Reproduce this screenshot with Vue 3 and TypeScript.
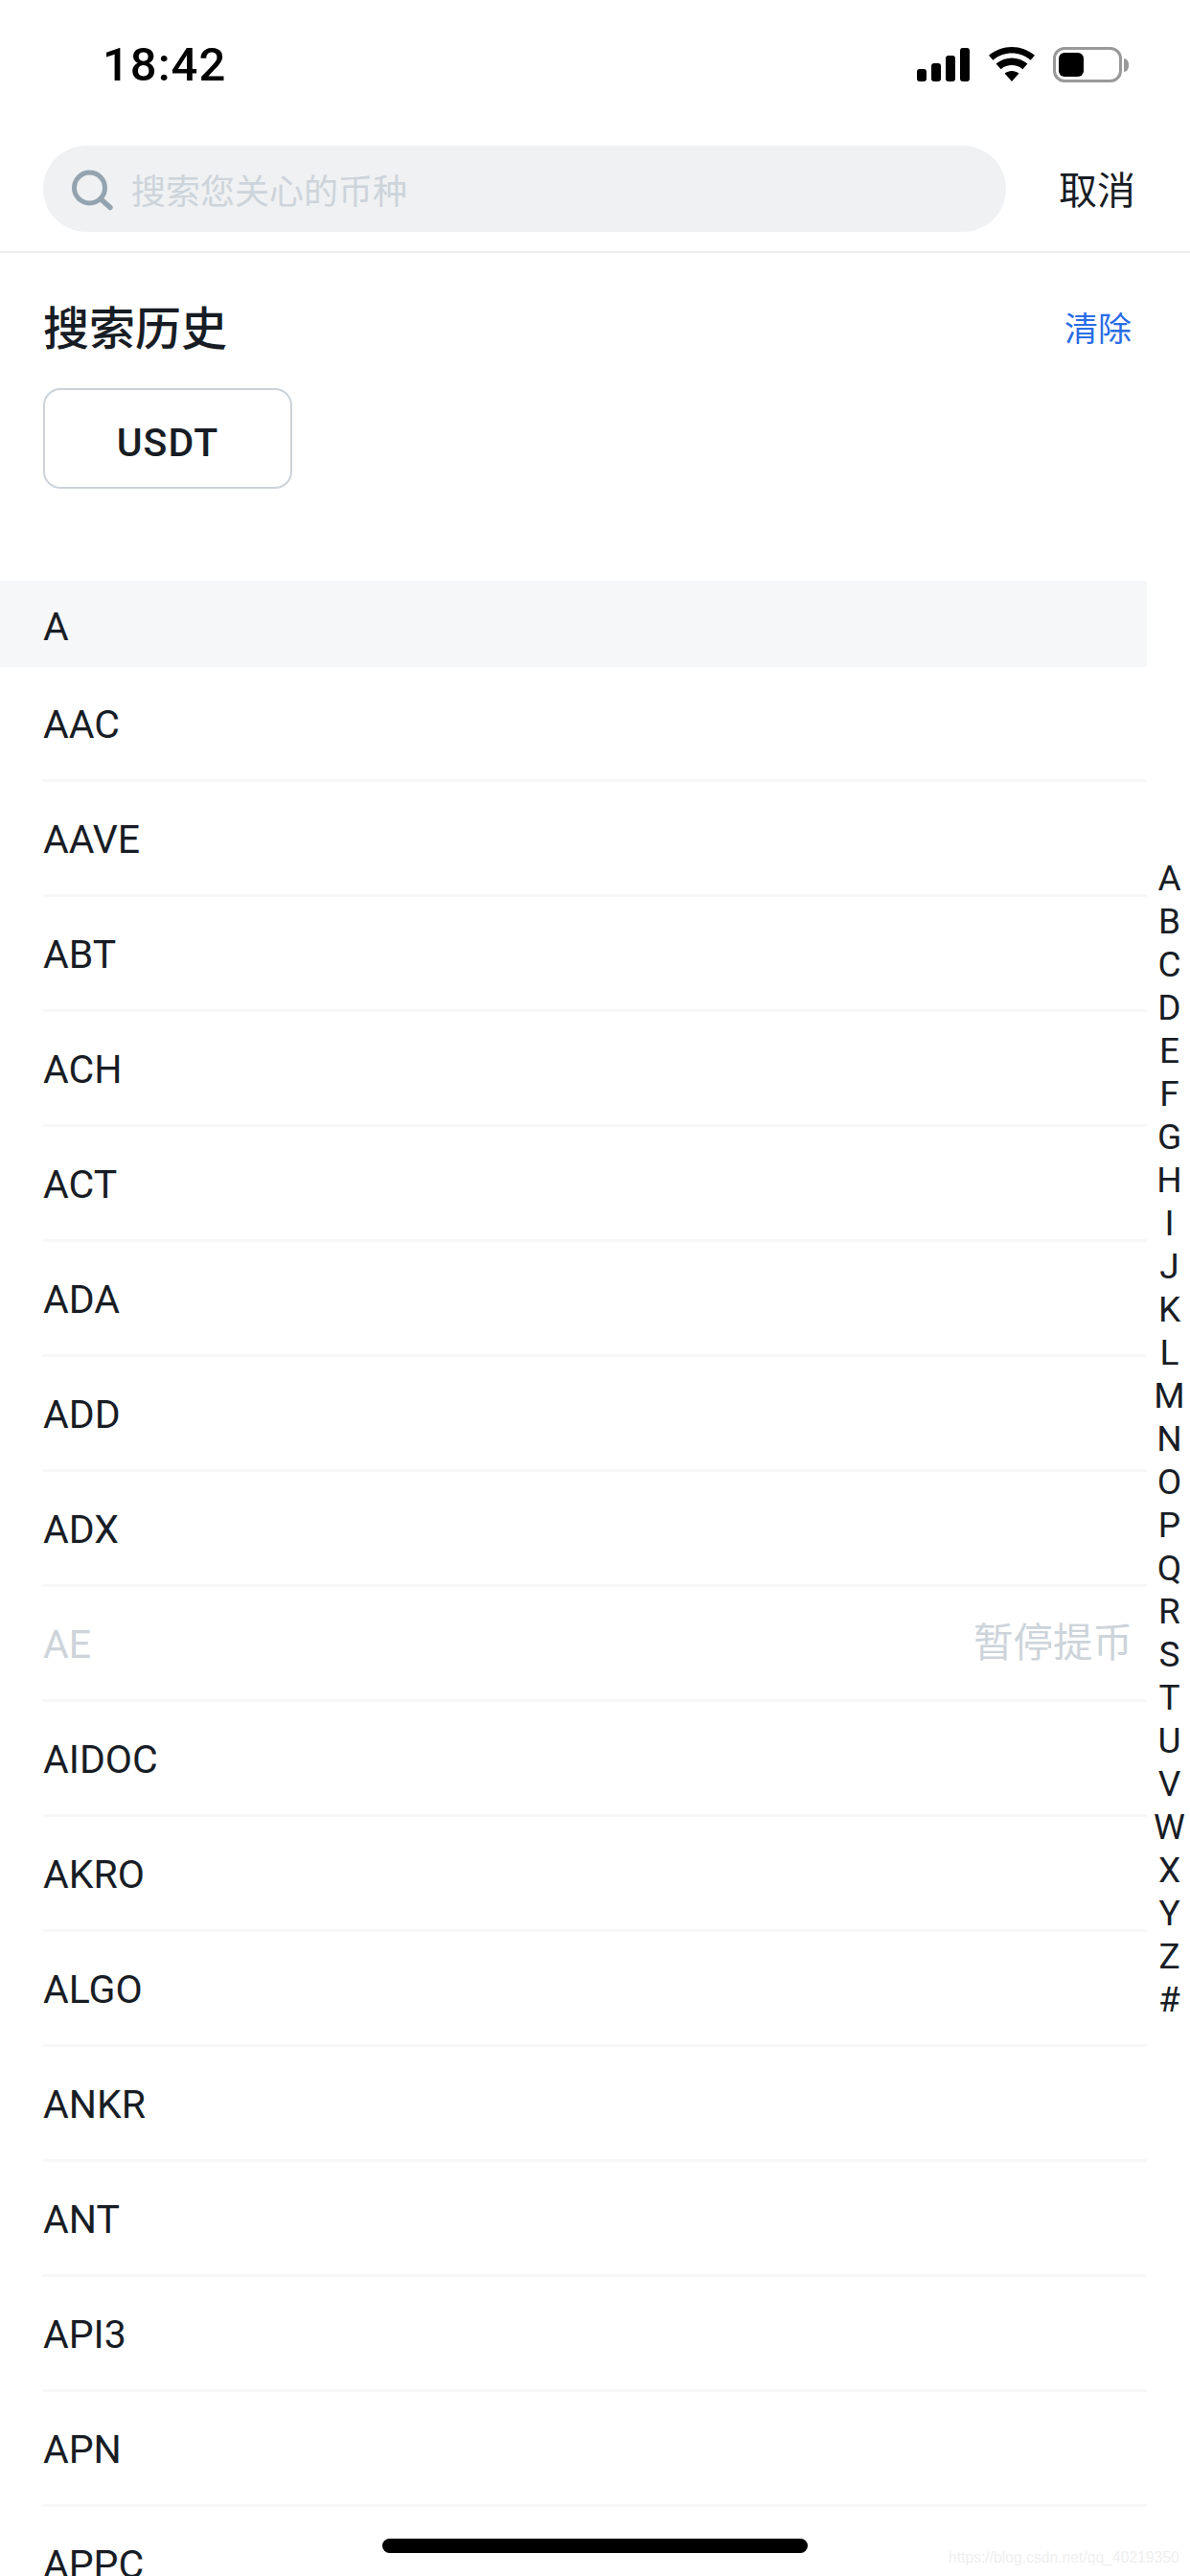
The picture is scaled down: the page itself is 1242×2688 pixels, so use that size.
<script setup lang="ts">
const coins: { name: string; note?: string }[] = [
  { name: 'AAC' }, { name: 'AAVE' }, { name: 'ABT' }, { name: 'ACH' }, { name: 'ACT' },
  { name: 'ADA' }, { name: 'ADD' }, { name: 'ADX' }, { name: 'AE', note: '暂停提币' },
  { name: 'AIDOC' }, { name: 'AKRO' }, { name: 'ALGO' }, { name: 'ANKR' }, { name: 'ANT' },
  { name: 'API3' }, { name: 'APN' }, { name: 'APPC' },
]

const letters: string[] = 'ABCDEFGHIJKLMNOPQRSTUVWXYZ#'.split('')
</script>

<template>
  <div class="page">
    <div class="status">
      <span class="time">18:42</span>
      <div class="status__icons">
        <svg class="signal" width="55" height="35" viewBox="0 0 55 35">
          <rect x="0" y="22" width="10" height="13" rx="3" />
          <rect x="15" y="16" width="10" height="19" rx="3" />
          <rect x="30" y="8" width="10" height="27" rx="3" />
          <rect x="45" y="0" width="10" height="35" rx="3" />
        </svg>
        <svg class="wifi" width="48" height="36" viewBox="0 0 48 36">
          <path d="M24 36 L16.5 27.5 C21 24 27 24 31.5 27.5 Z" />
          <path d="M12.6 23.2 L7.6 17.6 C17 9.6 31 9.6 40.4 17.6 L35.4 23.2 C28.6 17.6 19.4 17.6 12.6 23.2 Z" />
          <path d="M4.4 13.8 L0 8.8 C14 -2.9 34 -2.9 48 8.8 L43.6 13.8 C32 4.2 16 4.2 4.4 13.8 Z" />
        </svg>
        <div class="battery">
          <div class="battery__body"><div class="battery__fill"></div></div>
          <div class="battery__nub"></div>
        </div>
      </div>
    </div>

    <div class="search">
      <div class="search__box">
        <svg class="search__icon" width="46" height="44" viewBox="0 0 46 44" fill="none" stroke="#93a3b0">
          <circle cx="19.5" cy="19" r="16" stroke-width="5" />
          <path d="M31.5 31 L41 39.5" stroke-width="5.5" stroke-linecap="round" />
        </svg>
        <span class="search__placeholder">搜索您关心的币种</span>
      </div>
      <span class="search__cancel">取消</span>
    </div>

    <div class="history">
      <div class="history__head">
        <h2 class="history__title">搜索历史</h2>
        <span class="history__clear">清除</span>
      </div>
      <div class="chip">USDT</div>
    </div>

    <div class="list">
      <div class="list__section">A</div>
      <div v-for="coin in coins" :key="coin.name" class="coin" :class="{ 'coin--off': coin.note }">
        <span class="coin__name">{{ coin.name }}</span>
        <span v-if="coin.note" class="coin__note">{{ coin.note }}</span>
      </div>
    </div>

    <div class="index">
      <span v-for="l in letters" :key="l">{{ l }}</span>
    </div>

    <div class="home"></div>
    <span class="watermark">https://blog.csdn.net/qq_40219350</span>
  </div>
</template>

<style scoped>
.page {
  position: relative;
  width: 1242px;
  height: 2688px;
  overflow: hidden;
  background: #fff;
  color: #181d25;
  font-family: Roboto, "Noto Sans CJK SC", sans-serif;
}

.status {
  height: 132px;
  display: flex;
  justify-content: space-between;
  align-items: flex-start;
  padding: 0 64px 0 107px;
  box-sizing: border-box;
}

.time {
  margin-top: 40px;
  font-size: 49px;
  line-height: 56px;
  font-weight: 500;
  letter-spacing: 1px;
  color: #000;
}

.status__icons {
  display: flex;
  align-items: flex-start;
  margin-top: 49px;
}

.signal {
  fill: #000;
  margin-top: 1px;
  margin-right: 20px;
}

.wifi {
  fill: #000;
  margin-right: 19px;
}

.battery {
  display: flex;
  align-items: center;
}

.battery__body {
  width: 72px;
  height: 37px;
  box-sizing: border-box;
  border: 3px solid #999;
  border-radius: 12px;
  padding: 3px;
}

.battery__fill {
  width: 26px;
  height: 25px;
  background: #000;
  border-radius: 6px;
}

.battery__nub {
  width: 5px;
  height: 14px;
  margin-left: 2px;
  background: #999;
  border-radius: 0 6px 6px 0 / 0 7px 7px 0;
}

.search {
  display: flex;
  align-items: center;
  padding: 20px 57px 20px 45px;
  border-bottom: 2px solid #eceef0;
}

.search__box {
  width: 1005px;
  height: 90px;
  border-radius: 45px;
  background: #eff1f3;
  display: flex;
  align-items: center;
  padding-left: 29px;
  box-sizing: border-box;
}

.search__icon {
  margin-right: 17px;
  margin-top: 3px;
}

.search__placeholder {
  font-size: 36px;
  color: #cdd4da;
}

.search__cancel {
  margin-left: auto;
  margin-bottom: 3px;
  font-size: 40px;
}

.history {
  padding: 48px 61px 0 45px;
}

.history__head {
  display: flex;
  justify-content: space-between;
  align-items: center;
  height: 60px;
}

.history__title {
  margin: 0 0 6px;
  font-size: 48px;
  font-weight: 500;
}

.history__clear {
  margin-bottom: 3px;
  font-size: 35px;
  color: #2a6de6;
}

.chip {
  width: 260px;
  height: 105px;
  margin-top: 33px;
  padding-top: 8px;
  box-sizing: border-box;
  border: 2px solid #ccd3d9;
  border-radius: 18px;
  display: flex;
  align-items: center;
  justify-content: center;
  font-size: 41px;
  font-weight: 500;
  letter-spacing: 1px;
}

.list {
  width: 1197px;
  margin-top: 96px;
}

.list__section {
  height: 90px;
  padding-left: 45px;
  background: #f6f7f9;
  font-size: 41px;
  line-height: 96px;
}

.coin {
  height: 120px;
  margin-left: 45px;
  padding: 3px 15px 0 0;
  box-sizing: border-box;
  border-bottom: 3px solid #f7f7f7;
  display: flex;
  align-items: center;
  justify-content: space-between;
  font-size: 41px;
}

.coin--off {
  color: #cdd4da;
}

.coin__note {
  margin-bottom: 11px;
  font-size: 41.5px;
}

.index {
  position: absolute;
  top: 894px;
  left: 1198px;
  width: 45px;
  display: flex;
  flex-direction: column;
  align-items: center;
  font-size: 37px;
  line-height: 45px;
}

.home {
  position: absolute;
  left: 399px;
  top: 2649px;
  width: 444px;
  height: 15px;
  border-radius: 8px;
  background: #000;
}

.watermark {
  position: absolute;
  left: 990px;
  top: 2660px;
  font-family: "Liberation Sans", sans-serif;
  font-size: 15.7px;
  color: #efefef;
}
</style>

<style>
html, body {
  margin: 0;
  background: #fff;
}
</style>
